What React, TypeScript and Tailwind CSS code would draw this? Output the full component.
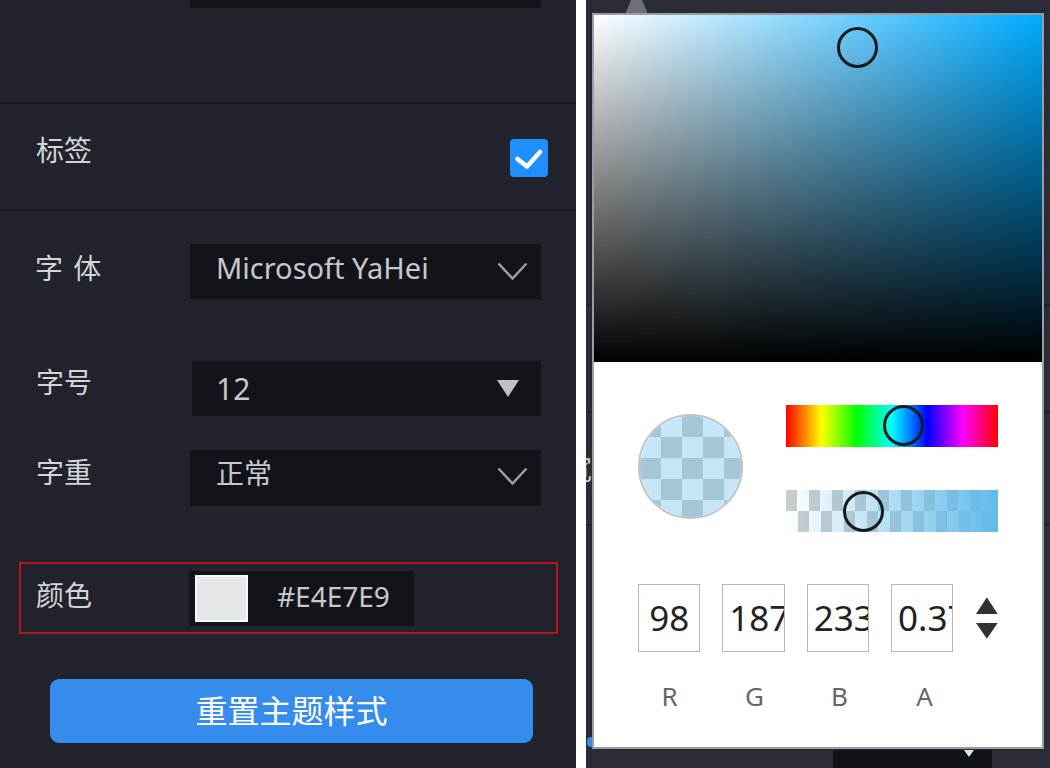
import React from "react";

const FONT = "font-['Noto_Sans','Noto_Sans_CJK_SC',sans-serif]";

function Chevron({ className = "" }: { className?: string }) {
  return (
    <svg className={className} width="31" height="18" viewBox="0 0 31 18" fill="none">
      <polyline points="1.5,1.5 15.5,16.5 29.5,1.5" stroke="#9b9da2" strokeWidth="2.5" />
    </svg>
  );
}

function Caret() {
  return (
    <svg width="22" height="17" viewBox="0 0 22 17">
      <polygon points="0,0 22,0 11,17" fill="#bfc1c5" />
    </svg>
  );
}

function Checkbox() {
  return (
    <div className="mt-[35px] w-[38px] h-[38px] rounded-[4px] bg-[#1e8fff] flex items-center justify-center">
      <svg width="38" height="38" viewBox="0 0 38 38" fill="none">
        <polyline
          points="7.5,20 17,27.5 30,13"
          stroke="#ffffff"
          strokeWidth="4.5"
          strokeLinecap="round"
          strokeLinejoin="round"
        />
      </svg>
    </div>
  );
}

function SettingsPanel() {
  return (
    <div className="w-[576px] shrink-0 h-full bg-[#22232d] flex flex-col text-[#d2d4d8]">
      <div className="h-[102px]">
        <div className="ml-[190px] w-[351px] h-[8px] bg-[#131419]" />
      </div>
      <div className="h-[2px] bg-[#1a1b21]" />
      <div className="h-[105px] flex items-start justify-between pl-[36px] pr-[28px]">
        <span className="mt-[28px] text-[28px] leading-[36px]">标签</span>
        <Checkbox />
      </div>
      <div className="h-[2px] bg-[#1a1b21]" />

      <div className="mt-[33px] flex items-center h-[55px]">
        <span className="w-[190px] pl-[35px] mb-[7px] text-[28px] leading-[36px] [word-spacing:3px]">字 体</span>
        <div className="w-[351px] h-[55px] bg-[#131419] flex items-center justify-between pl-[26px] pr-[13px]">
          <span className="mb-[8px] text-[29px] leading-[36px] text-[#c6c8cc]">Microsoft YaHei</span>
          <Chevron className="mb-[2px]" />
        </div>
      </div>

      <div className="mt-[62px] flex items-center h-[55px]">
        <span className="w-[192px] pl-[36px] mb-[13px] text-[28px] leading-[36px]">字号</span>
        <div className="w-[349px] h-[55px] bg-[#131419] flex items-center justify-between pl-[24px] pr-[22px]">
          <span className="text-[30px] leading-[36px] text-[#c6c8cc]">12</span>
          <Caret />
        </div>
      </div>

      <div className="mt-[34px] flex items-center h-[56px]">
        <span className="w-[190px] pl-[36px] mb-[12px] text-[28px] leading-[36px]">字重</span>
        <div className="w-[351px] h-[56px] bg-[#131419] flex items-center justify-between pl-[26px] pr-[13px]">
          <span className="mb-[10px] text-[28px] leading-[36px] text-[#c6c8cc]">正常</span>
          <Chevron className="mb-[4px]" />
        </div>
      </div>

      <div className="mt-[56px] ml-[19px] w-[539px] h-[72px] border-2 border-[#b3161d] flex items-center">
        <span className="w-[168px] pl-[15px] mb-[6px] text-[28px] leading-[36px]">颜色</span>
        <div className="w-[225px] h-[55px] bg-[#131419] flex items-center pl-[6px]">
          <div className="w-[53px] h-[47px] bg-[#e4e7e9] border-2 border-[#f7f7f7]" />
          <span className="ml-[29px] mb-[5px] text-[28px] leading-[36px] text-[#c6c8cc]">#E4E7E9</span>
        </div>
      </div>

      <button className="mt-[45px] ml-[50px] w-[483px] h-[64px] rounded-[9px] bg-[#358ced] text-white text-[32px] leading-[40px] flex items-center justify-center">
        重置主题样式
      </button>
    </div>
  );
}

function Handle({ className }: { className: string }) {
  return <div className={"absolute w-[41px] h-[41px] rounded-full border-[3px] border-[#1a1a1a] " + className} />;
}

function ColorPicker() {
  const channels = [
    { label: "R", value: "98" },
    { label: "G", value: "187" },
    { label: "B", value: "233" },
    { label: "A", value: "0.37" },
  ];
  return (
    <div className="absolute left-[6px] top-[13px] w-[452px] h-[736px] border-2 border-[#9b9ca1] bg-white flex flex-col">
      <div className="relative h-[347px] bg-[linear-gradient(to_right,#ffffff,#00aaff)]">
        <div className="absolute inset-0 bg-[linear-gradient(to_top,#000000,rgba(0,0,0,0))]" />
        <Handle className="left-[243px] top-[12px]" />
      </div>

      <div className="flex-1 flex flex-col px-[44px] pt-[43px]">
        <div className="flex items-start">
          <div className="relative mt-[9px] w-[105px] h-[105px] rounded-full border-2 border-[#c2c2c2] overflow-hidden">
            <div className="absolute inset-0 bg-[conic-gradient(#ffffff_25%,#cccccc_0_50%,#ffffff_0_75%,#cccccc_0)] bg-[length:42px_42px]" />
            <div className="absolute inset-0 bg-[rgba(98,187,233,0.37)]" />
          </div>
          <div className="ml-[43px] w-[212px] flex flex-col gap-[43px]">
            <div className="relative h-[42px] bg-[linear-gradient(to_right,#ff0000,#ffff00,#00ff00,#00ffff,#0000ff,#ff00ff,#ff0000)]">
              <Handle className="left-[97px] top-0" />
            </div>
            <div className="relative h-[42px]">
              <div className="absolute inset-0 bg-[conic-gradient(#ffffff_25%,#cccccc_0_50%,#ffffff_0_75%,#cccccc_0)] bg-[length:23px_42px]" />
              <div className="absolute inset-0 bg-[linear-gradient(to_right,rgba(98,187,233,0),rgb(98,187,233))]" />
              <Handle className="left-[57px] top-[1px]" />
            </div>
          </div>
        </div>

        <div className="mt-[52px] flex items-center gap-[22px]">
          {channels.map((c) => (
            <div
              key={c.label}
              className="w-[63px] h-[68px] border border-[#b4b4b4] px-[6px] overflow-hidden whitespace-nowrap text-center text-[35px] leading-[66px] text-[#222222]"
            >
              {c.value}
            </div>
          ))}
          <svg className="ml-[1px]" width="22" height="42" viewBox="0 0 22 42">
            <polygon points="11,0 22,17 0,17" fill="#333333" />
            <polygon points="0,26 22,26 11,42" fill="#333333" />
          </svg>
        </div>

        <div className="mt-[29px] flex gap-[22px]">
          {channels.map((c) => (
            <span key={c.label} className="w-[63px] text-center text-[26px] leading-[30px] text-[#666666]">
              {c.label}
            </span>
          ))}
        </div>
      </div>
    </div>
  );
}

function PreviewPanel() {
  return (
    <div className="relative w-[464px] h-full overflow-hidden bg-[#2b2c36] flex flex-col">
      <div className="h-[306px] border-b-2 border-[#1f2028]" />
      <div className="h-[107px] border-b-2 border-[#1f2028]" />
      <div className="h-[113px] border-b-2 border-[#1f2028] flex items-center">
        <span className="-ml-[22px] text-[28px] leading-[36px] text-[#cdd0d5]">宽</span>
      </div>
      <div className="flex-1 flex flex-col justify-end">
        <div className="ml-[1px] mb-[3px] w-[8px] h-[10px] rounded-full bg-[#358ced]" />
        <div className="relative ml-[247px] w-[159px] h-[18px] bg-[#121319]">
          <svg className="absolute left-[131px] top-0" width="10" height="7" viewBox="0 0 10 7">
            <polygon points="0,0 10,0 5,7" fill="#d6e6f5" />
          </svg>
        </div>
      </div>

      <svg className="absolute left-[39px] top-0" width="23" height="14" viewBox="0 0 23 14">
        <polygon points="6,0 17,0 23,14 0,14" fill="#6f7076" />
      </svg>
      <ColorPicker />
    </div>
  );
}

export default function App() {
  return (
    <div className={"flex w-[1050px] h-[768px] overflow-hidden " + FONT}>
      <SettingsPanel />
      <div className="w-[10px] shrink-0 bg-white" />
      <PreviewPanel />
    </div>
  );
}
